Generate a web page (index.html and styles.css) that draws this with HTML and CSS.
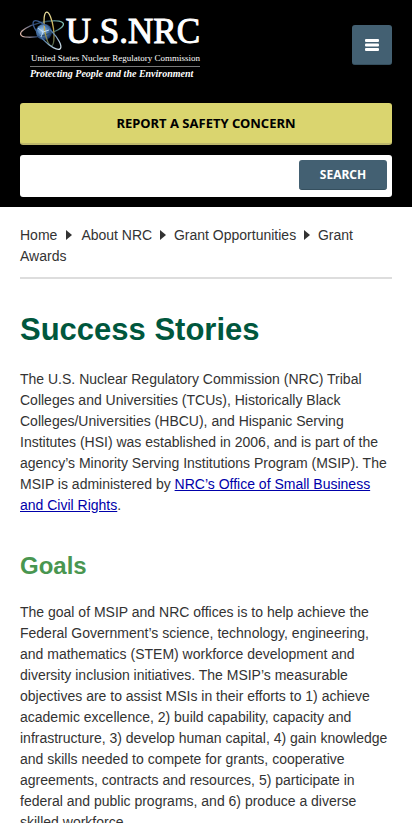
FILE: index.html
```html
<!DOCTYPE html>
<html lang="en">
<head>
<meta charset="utf-8">
<meta name="viewport" content="width=device-width, initial-scale=1">
<title>Success Stories | NRC</title>
<link rel="stylesheet" href="styles.css">
</head>
<body>
<header class="site-header">
  <div class="masthead">
    <a class="logo" href="#">
      <svg class="logo-atom" viewBox="0 0 46 42" aria-hidden="true">
        <defs>
          <radialGradient id="core" cx=".4" cy=".4" r=".6">
            <stop offset="0" stop-color="#a9cdec"/>
            <stop offset=".5" stop-color="#5585bb"/>
            <stop offset="1" stop-color="#17315e"/>
          </radialGradient>
          <linearGradient id="wide">
            <stop offset="0" stop-color="#e0b7a8"/>
            <stop offset=".35" stop-color="#2c4670"/>
            <stop offset=".7" stop-color="#2e5260"/>
            <stop offset="1" stop-color="#7fc0b4"/>
          </linearGradient>
          <linearGradient id="tall" x2="0" y2="1">
            <stop offset="0" stop-color="#f0e4a4"/>
            <stop offset=".5" stop-color="#c0a94c"/>
            <stop offset="1" stop-color="#4a5f4a"/>
          </linearGradient>
          <linearGradient id="low">
            <stop offset="0" stop-color="#35558c"/>
            <stop offset=".5" stop-color="#4b79a8"/>
            <stop offset="1" stop-color="#d3e3ea"/>
          </linearGradient>
        </defs>
        <circle cx="24" cy="21" r="8" fill="url(#core)"/>
        <g fill="none" stroke-width="1.3">
          <ellipse cx="22" cy="18" rx="22" ry="6.5" transform="rotate(-14 22 18)" stroke="url(#wide)"/>
          <ellipse cx="29" cy="18" rx="4.5" ry="17" transform="rotate(-8 29 18)" stroke="url(#tall)"/>
          <ellipse cx="27" cy="24" rx="19" ry="6" transform="rotate(46 27 24)" stroke="url(#low)"/>
        </g>
        <path d="M18 17l5 4 6-2m-6 2-2 5" stroke="#d8efff" stroke-width=".8" fill="none"/>
      </svg>
      <span class="logo-name">U.S.NRC</span>
      <span class="logo-agency">United States Nuclear Regulatory Commission</span>
      <span class="logo-motto">Protecting People and the Environment</span>
    </a>
    <button class="menu-button" type="button" aria-label="Menu">
      <svg class="menu-icon" viewBox="0 0 16 14" aria-hidden="true">
        <g fill="#fff"><rect x="1" y="1" width="14" height="3" rx="1"/><rect x="1" y="5.5" width="14" height="3" rx="1"/><rect x="1" y="10" width="14" height="3" rx="1"/></g>
      </svg>
    </button>
  </div>
  <a class="safety-button" href="#">REPORT A SAFETY CONCERN</a>
  <form class="search">
    <input class="search-input" type="search" aria-label="Search">
    <button class="search-button" type="submit">SEARCH</button>
  </form>
</header>
<main class="content">
  <nav class="breadcrumb" aria-label="Breadcrumb">
    <a href="#">Home</a> <span class="arrow first"></span> <a href="#">About NRC</a> <span class="arrow"></span> <a href="#">Grant Opportunities</a> <span class="arrow"></span> <a href="#">Grant Awards</a>
  </nav>
  <h1>Success Stories</h1>
  <p>The U.S. Nuclear Regulatory Commission (NRC) Tribal Colleges and Universities (TCUs), Historically Black Colleges/Universities (HBCU), and Hispanic Serving Institutes (HSI) was established in 2006, and is part of the agency’s Minority Serving Institutions Program (MSIP). The MSIP is administered by <a href="#">NRC’s Office of Small Business and Civil Rights</a>.</p>
  <h2>Goals</h2>
  <p>The goal of MSIP and NRC offices is to help achieve the Federal Government’s science, technology, engineering, and mathematics (STEM) workforce development and diversity inclusion initiatives. The MSIP’s measurable objectives are to assist MSIs in their efforts to 1) achieve academic excellence, 2) build capability, capacity and infrastructure, 3) develop human capital, 4) gain knowledge and skills needed to compete for grants, cooperative agreements, contracts and resources, 5) participate in federal and public programs, and 6) produce a diverse skilled workforce.</p>
</main>
</body>
</html>
```
FILE: styles.css
```css
* { box-sizing: border-box; }
body {
  margin: 0;
  background: #fff;
  color: #333;
  font: 14px/21px "Liberation Sans", Arial, sans-serif;
}
.site-header {
  padding: 10px 20px;
  background: #000;
}
.masthead {
  display: flex;
  justify-content: space-between;
  align-items: flex-start;
  margin-bottom: 22px;
}
.logo {
  position: relative;
  display: flex;
  flex-direction: column;
  align-items: flex-end;
  width: 180px;
  color: #fff;
  font-family: "Liberation Serif", serif;
  text-decoration: none;
  white-space: nowrap;
}
.logo-atom {
  position: absolute;
  left: 0;
  top: 1px;
  width: 46px;
  height: 42px;
}
.logo-name {
  font-size: 35px;
  line-height: 43px;
  -webkit-text-stroke: 1px #fff;
}
.logo-agency { font-size: 9px; line-height: 11px; }
.logo-motto {
  width: 170px;
  margin-top: 2px;
  border-top: 1px solid #777;
  font-size: 10px;
  line-height: 14px;
  font-weight: bold;
  font-style: italic;
}
.menu-button {
  display: flex;
  align-items: center;
  justify-content: center;
  width: 40px;
  height: 40px;
  margin-top: 15px;
  padding: 0;
  border: 0;
  border-bottom: 1px solid #354f5e;
  border-radius: 3px;
  background: #436072;
}
.menu-icon { width: 16px; height: 14px; }
.safety-button {
  display: block;
  margin-bottom: 10px;
  border-bottom: 2px solid #bdb76b;
  border-radius: 3px;
  background: #dad56f;
  color: #000;
  font: bold 13px/40px "Noto Sans", sans-serif;
  text-align: center;
  text-decoration: none;
}
.search {
  display: flex;
  height: 42px;
  padding: 5px;
  border-radius: 3px;
  background: #fff;
}
.search-input {
  flex: 1;
  min-width: 0;
  border: 0;
  background: none;
  font: inherit;
}
.search-button {
  width: 88px;
  height: 30px;
  padding: 0;
  border: 0;
  border-bottom: 1px solid #354f5e;
  border-radius: 3px;
  background: #436072;
  color: #fff;
  font: bold 12px/28px "Noto Sans", sans-serif;
}
.content { padding: 18px 20px; }
.breadcrumb {
  padding-bottom: 10px;
  border-bottom: 2px solid #ddd;
}
.breadcrumb a { color: #333; text-decoration: none; }
.arrow {
  display: inline-block;
  margin: 0 4px;
  border-left: 6px solid #333;
  border-top: 5px solid transparent;
  border-bottom: 5px solid transparent;
}
.arrow.first { margin: 0 6px 0 5px; }
h1 {
  margin: 33px 0 21px;
  color: #00573d;
  font-size: 31px;
  line-height: 36px;
}
h2 {
  margin: 35px 0 21px;
  color: #499650;
  font-size: 24px;
  line-height: 30px;
}
p { margin: 0; }
p a { color: #00a; }
```
